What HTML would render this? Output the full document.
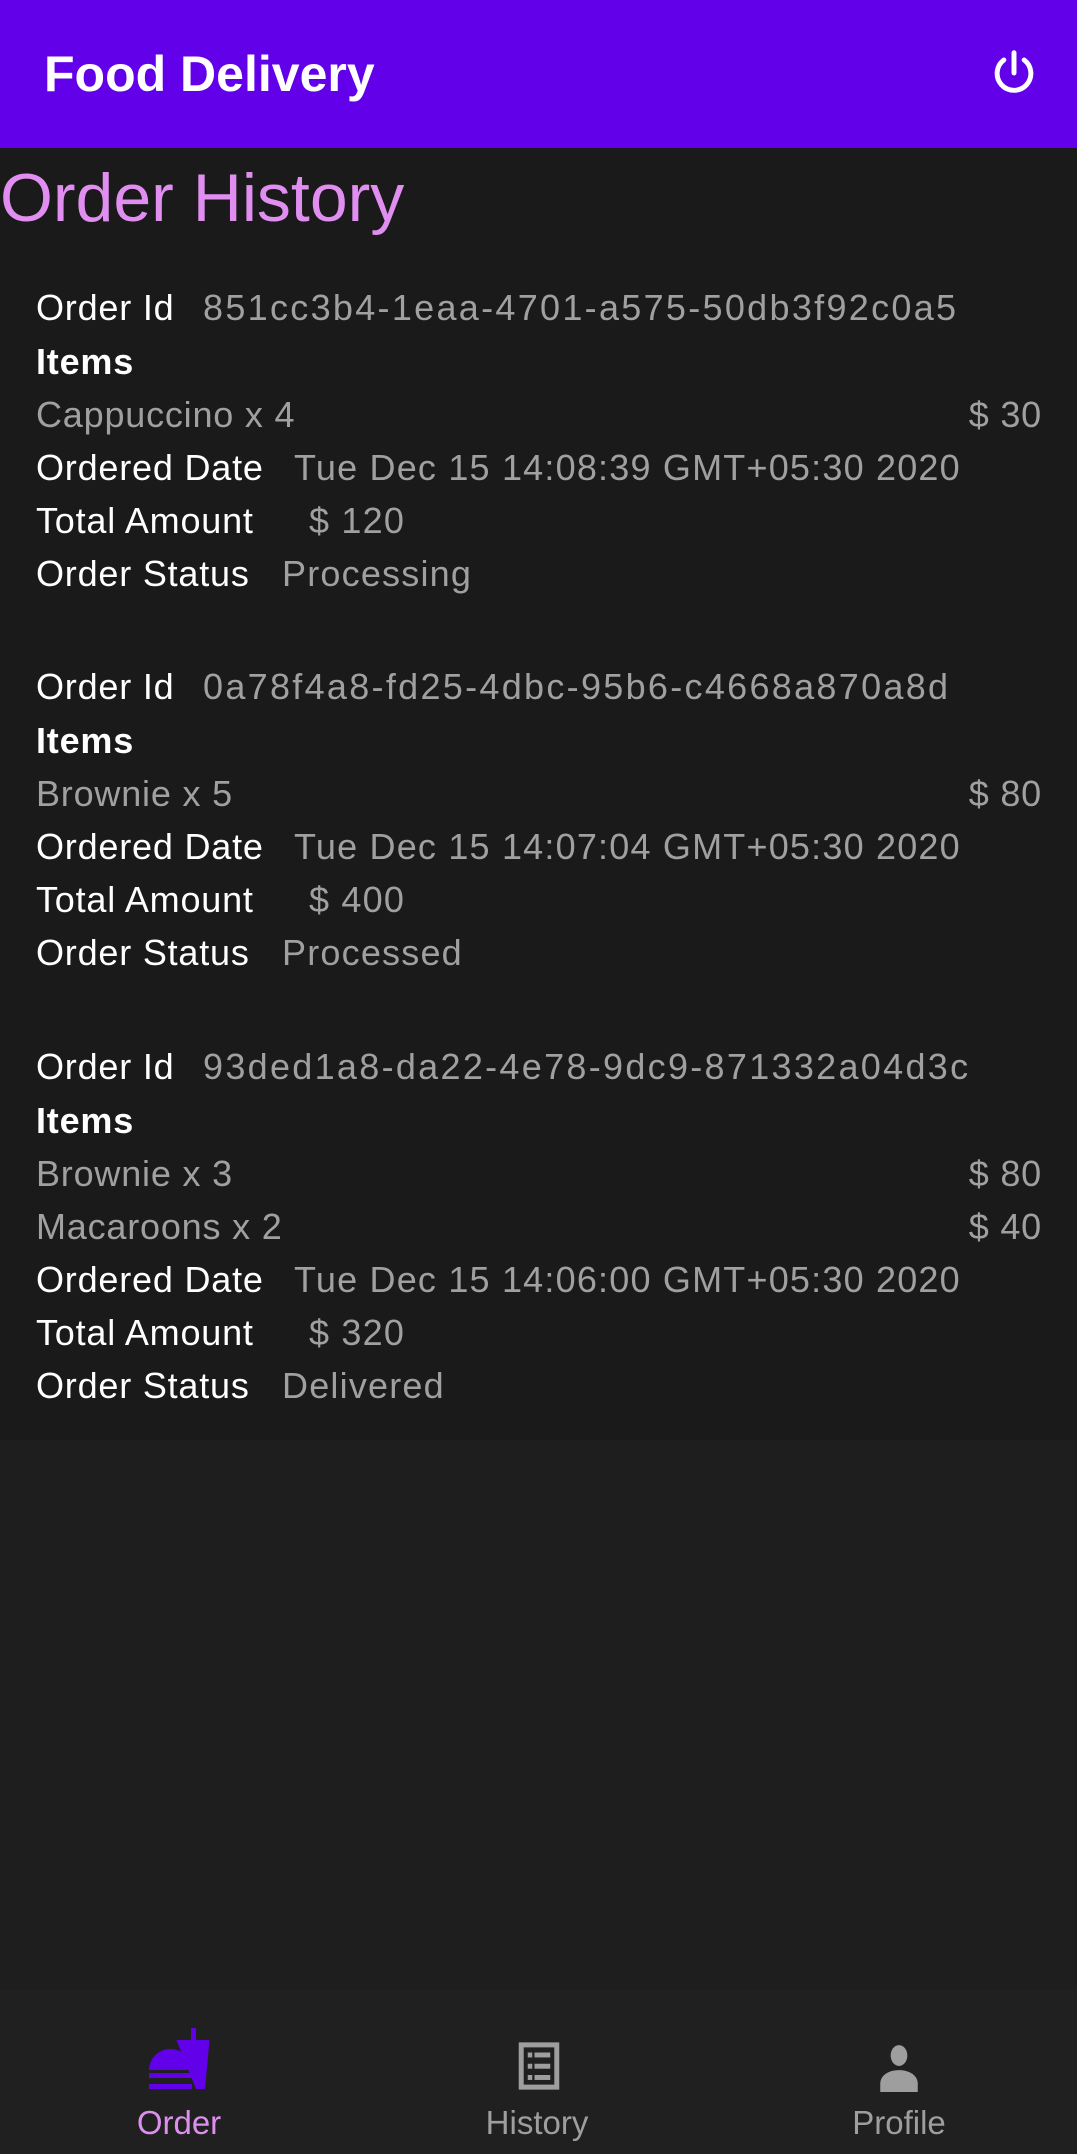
<!DOCTYPE html>
<html><head><meta charset="utf-8"><style>
*{margin:0;padding:0;box-sizing:border-box}
body{width:1077px;height:2154px;background:#1e1e1e;font-family:"Liberation Sans",Arial,sans-serif;position:relative;overflow:hidden}
.hdr{position:absolute;left:0;top:0;width:1077px;height:148px;background:#6200ea}
.ttl{position:absolute;left:44px;top:44px;font-size:50px;font-weight:bold;color:#fff;line-height:60px}
.oh{position:absolute;left:0;top:158px;font-size:68px;color:#e08ff0;line-height:80px}
.list{position:absolute;left:0;top:148px;width:1077px;height:1292px;background:#1a1a1a}
.r{position:absolute;left:36px;height:53px;line-height:53px;font-size:36px;color:#fff;white-space:nowrap;letter-spacing:0.8px}
.v{position:absolute;height:53px;line-height:53px;font-size:36px;color:#a0a0a0;white-space:nowrap;letter-spacing:1.2px}
.id{letter-spacing:2.3px}
.g{color:#a0a0a0}
.b{font-weight:bold}
.p{position:absolute;right:35px;height:53px;line-height:53px;font-size:36px;color:#a0a0a0;letter-spacing:0.8px}
.nav{position:absolute;left:0;top:1990px;width:1077px;height:164px;background:#202020}
.lab{position:absolute;top:2099px;width:200px;text-align:center;font-size:33px;line-height:48px;color:#9e9e9e}
</style></head><body>
<div class="hdr"></div>
<div class="ttl">Food Delivery</div>
<svg style="position:absolute;left:987px;top:46px" width="54" height="54" viewBox="0 0 24 24"><path d="M12 3v9" stroke="#fff" stroke-width="2.2" stroke-linecap="round" fill="none"/><path d="M7.5 6.2A7.5 7.5 0 1 0 16.5 6.2" stroke="#fff" stroke-width="2.2" stroke-linecap="round" fill="none"/></svg>
<div class="list"></div>
<div class="oh">Order History</div>

<div class="r" style="top:281px">Order Id</div><div class="v id" style="left:203px;top:281px">851cc3b4-1eaa-4701-a575-50db3f92c0a5</div>
<div class="r b" style="top:335px">Items</div>
<div class="r g" style="top:388px">Cappuccino x 4</div><div class="p" style="top:388px">$ 30</div>
<div class="r" style="top:441px">Ordered Date</div><div class="v" style="left:294px;top:441px">Tue Dec 15 14:08:39 GMT+05:30 2020</div>
<div class="r" style="top:494px">Total Amount</div><div class="v" style="left:309px;top:494px">$ 120</div>
<div class="r" style="top:547px">Order Status</div><div class="v" style="left:282px;top:547px">Processing</div>

<div class="r" style="top:660px">Order Id</div><div class="v id" style="left:203px;top:660px">0a78f4a8-fd25-4dbc-95b6-c4668a870a8d</div>
<div class="r b" style="top:714px">Items</div>
<div class="r g" style="top:767px">Brownie x 5</div><div class="p" style="top:767px">$ 80</div>
<div class="r" style="top:820px">Ordered Date</div><div class="v" style="left:294px;top:820px">Tue Dec 15 14:07:04 GMT+05:30 2020</div>
<div class="r" style="top:873px">Total Amount</div><div class="v" style="left:309px;top:873px">$ 400</div>
<div class="r" style="top:926px">Order Status</div><div class="v" style="left:282px;top:926px">Processed</div>

<div class="r" style="top:1040px">Order Id</div><div class="v id" style="left:203px;top:1040px">93ded1a8-da22-4e78-9dc9-871332a04d3c</div>
<div class="r b" style="top:1094px">Items</div>
<div class="r g" style="top:1147px">Brownie x 3</div><div class="p" style="top:1147px">$ 80</div>
<div class="r g" style="top:1200px">Macaroons x 2</div><div class="p" style="top:1200px">$ 40</div>
<div class="r" style="top:1253px">Ordered Date</div><div class="v" style="left:294px;top:1253px">Tue Dec 15 14:06:00 GMT+05:30 2020</div>
<div class="r" style="top:1306px">Total Amount</div><div class="v" style="left:309px;top:1306px">$ 320</div>
<div class="r" style="top:1359px">Order Status</div><div class="v" style="left:282px;top:1359px">Delivered</div>

<div class="nav"></div>
<svg style="position:absolute;left:145px;top:2025px" width="70" height="70" viewBox="0 0 70 70" fill="#6200ea">
<rect x="46" y="3" width="5" height="13"/>
<path d="M31.5 15H64.5L60 64H51z"/>
<path d="M4 45A21.5 21 0 0 1 47 45z"/>
<rect x="4" y="48" width="43" height="5"/>
<rect x="4" y="59" width="43" height="5"/>
</svg>
<svg style="position:absolute;left:512px;top:2039px" width="54" height="54" viewBox="0 0 24 24" fill="#9e9e9e">
<path d="M3 1.5h18v21H3zM5.2 3.7v16.6h13.6V3.7z"/><rect x="7" y="6" width="2" height="2.2"/><rect x="10" y="6" width="7" height="2.2"/><rect x="7" y="11" width="2" height="2.2"/><rect x="10" y="11" width="7" height="2.2"/><rect x="7" y="16" width="2" height="2.2"/><rect x="10" y="16" width="7" height="2.2"/>
</svg>
<svg style="position:absolute;left:874px;top:2042px" width="50" height="50" viewBox="0 0 24 24" fill="#9e9e9e">
<ellipse cx="12" cy="6.5" rx="4" ry="5"/><path d="M3 24v-4c0-4 4-6.5 9-6.5s9 2.5 9 6.5v4z"/>
</svg>
<div class="lab" style="left:79px;color:#dd8fef">Order</div>
<div class="lab" style="left:437px">History</div>
<div class="lab" style="left:799px">Profile</div>
</body></html>
